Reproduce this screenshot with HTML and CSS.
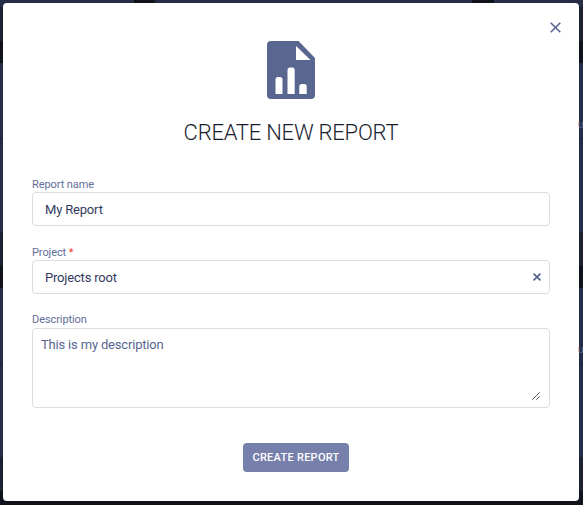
FILE: index.html
```html
<!DOCTYPE html>
<html lang="en">
<head>
<meta charset="utf-8">
<title>Create new report</title>
<link rel="stylesheet" href="styles.css">
</head>
<body>
<div class="backdrop">
  <main class="modal" role="dialog" aria-labelledby="title">
    <button class="close" type="button" aria-label="Close">
      <svg width="11" height="11" viewBox="0 0 11 11"><path d="M.7.7l9.6 9.6M10.3.7L.7 10.3" stroke="#59668f" stroke-width="1.6" fill="none"/></svg>
    </button>
    <svg class="report-icon" width="48" height="58" viewBox="0 0 48 58">
      <path d="M4 0H31.500L48 17V54a4 4 0 0 1-4 4H4a4 4 0 0 1-4-4V4a4 4 0 0 1 4-4z" fill="#59668f"/>
      <path d="M29 5V19H43.500zM8.500 53V38.500a2.500 2.500 0 0 1 2.500-2.500h2a2.500 2.500 0 0 1 2.500 2.500V53zM20.500 53V29a2.500 2.500 0 0 1 2.500-2.500h2.200a2.500 2.500 0 0 1 2.500 2.500V53zM32.300 53V45.500a2.500 2.500 0 0 1 2.500-2.500h2.400a2.500 2.500 0 0 1 2.500 2.500V53z" fill="#fff"/>
    </svg>
    <h1 class="title" id="title">CREATE NEW REPORT</h1>
    <form class="form">
      <div class="field">
        <label class="label">Report name</label>
        <div class="control">My Report</div>
      </div>
      <div class="field">
        <label class="label">Project <span class="required">*</span></label>
        <div class="control">
          <span>Projects root</span>
          <svg class="clear" width="8" height="8" viewBox="0 0 8 8"><path d="M.6.6l6.800 6.800M7.400.6L.6 7.400" stroke="#53618d" stroke-width="1.700" fill="none"/></svg>
        </div>
      </div>
      <div class="field">
        <label class="label label-area">Description</label>
        <div class="control area">
          <span>This is my description</span>
          <svg class="grip" width="8" height="8" viewBox="0 0 8 8"><path d="M.3 7.700L7.700.3M4.300 7.700L7.700 4.300" stroke="#555" stroke-width="1" fill="none"/></svg>
        </div>
      </div>
      <button class="submit" type="button">CREATE REPORT</button>
    </form>
  </main>
  <span class="peek peek-first">u</span>
  <span class="peek peek-second">u</span>
</div>
</body>
</html>
```
FILE: styles.css
```css
* { box-sizing: border-box; }

body {
  margin: 0;
  font-family: Roboto, "Liberation Sans", sans-serif;
}

.backdrop {
  position: relative;
  height: 505px;
  padding: 3px 4px 4px 3px;
  overflow: hidden;
  background:
    linear-gradient(#11131c, #11131c) 134px 0 / 21px 3px no-repeat,
    linear-gradient(#11131c, #11131c) 472px 0 / 22px 3px no-repeat,
    linear-gradient(
      #262c46 0 7px, #1b2131 7px 41px, #11131c 41px 63px,
      #252c45 63px 138px, #1b2135 138px 139px, #252c45 139px 232px,
      #1b2131 232px 266px, #11131c 266px 288px,
      #252c45 288px 363px, #1b2135 363px 364px, #252c45 364px 457px,
      #1b2131 457px 491px, #11131c 491px);
}

.modal {
  position: relative;
  display: flex;
  flex-direction: column;
  align-items: center;
  height: 498px;
  padding: 38px 29px 0;
  border-radius: 4px;
  background: #fff;
}

.close {
  position: absolute;
  top: 19px;
  right: 18px;
  padding: 0;
  border: 0;
  background: none;
  line-height: 0;
}

.report-icon { display: block; }

.title {
  margin: 18px 0 0;
  font-size: 22px;
  font-weight: 300;
  line-height: 32px;
  letter-spacing: -.22px;
  color: #1a1d2f;
}

.form {
  display: flex;
  flex-direction: column;
  align-self: stretch;
  margin-top: 28px;
}

.field { margin-bottom: 19px; }

.label {
  display: block;
  height: 15px;
  font-size: 11px;
  line-height: 15px;
  letter-spacing: -.08px;
  color: #626e98;
}

.label-area { line-height: 13px; }

.required { color: #f4433c; }

.control {
  display: flex;
  align-items: center;
  justify-content: space-between;
  height: 34px;
  padding: 0 8px 0 12px;
  border: 1px solid #dcdcde;
  border-radius: 4px;
  font-size: 13px;
  letter-spacing: -.18px;
  color: #333b5c;
}

.area {
  position: relative;
  align-items: flex-start;
  height: 80px;
  padding: 8px;
  line-height: 16px;
  color: #59668f;
}

.grip {
  position: absolute;
  right: 9px;
  bottom: 7px;
}

.submit {
  align-self: center;
  width: 106px;
  height: 29px;
  margin: 16px 0 0 10px;
  padding: 0;
  border: 0;
  border-radius: 4px;
  background: #7680ab;
  color: #fff;
  font: 500 11px/29px Roboto, "Liberation Sans", sans-serif;
  letter-spacing: .27px;
}

.peek {
  position: absolute;
  left: 578px;
  font-size: 10px;
  line-height: 12px;
  color: #506399;
}

.peek-first { top: 119px; }
.peek-second { top: 344px; }
```
